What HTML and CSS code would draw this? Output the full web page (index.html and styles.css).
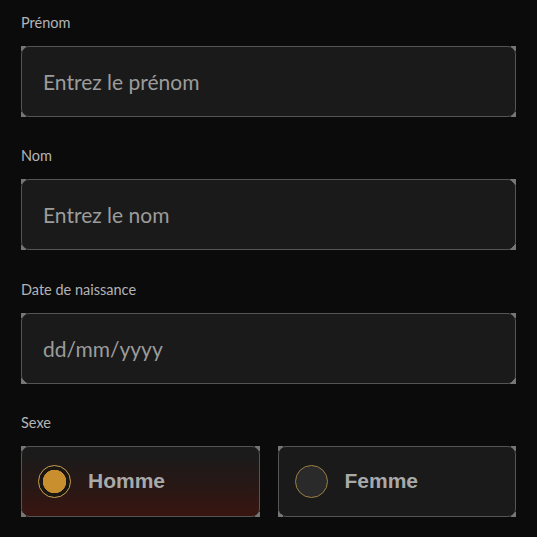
FILE: index.html
```html
<!DOCTYPE html>
<html lang="fr">
<head>
<meta charset="UTF-8">
<meta name="viewport" content="width=device-width, initial-scale=1.0">
<title>Formulaire</title>
<link rel="stylesheet" href="styles.css">
</head>
<body>

<form class="profile-form">
    <div class="field">
        <label class="field-label" for="prenom">Prénom</label>
        <div class="frame">
            <input class="text-input" type="text" id="prenom" placeholder="Entrez le prénom">
        </div>
    </div>

    <div class="field">
        <label class="field-label" for="nom">Nom</label>
        <div class="frame">
            <input class="text-input" type="text" id="nom" placeholder="Entrez le nom">
        </div>
    </div>

    <div class="field">
        <label class="field-label" for="naissance">Date de naissance</label>
        <div class="frame">
            <input class="text-input" type="text" id="naissance" placeholder="dd/mm/yyyy">
        </div>
    </div>

    <div class="field">
        <span class="field-label">Sexe</span>
        <div class="gender-row">
            <label class="frame option">
                <input type="radio" name="sexe" value="homme" checked>
                <span class="option-box">
                    <span class="dot"></span>
                    <span class="option-text">Homme</span>
                </span>
            </label>
            <label class="frame option">
                <input type="radio" name="sexe" value="femme">
                <span class="option-box">
                    <span class="dot"></span>
                    <span class="option-text">Femme</span>
                </span>
            </label>
        </div>
    </div>
</form>

</body>
</html>
```

FILE: styles.css
```css
body {
    margin: 0;
    padding: 0;
    background: #0c0b0c;
    font-family: Lato, "Open Sans", sans-serif;
}

.profile-form {
    padding: 13px 21px 0 21px;
}

.field {
    margin-bottom: 29.33px;
}

.field-label {
    display: block;
    font-size: 14.5px;
    line-height: 20px;
    color: #b4b4b4;
    margin-bottom: 13px;
}

.frame {
    position: relative;
    display: block;
    height: 71px;
}

/* little corner triangles drawn over the box */
.frame::after {
    content: "";
    position: absolute;
    inset: 0;
    pointer-events: none;
    background:
        linear-gradient(135deg, #767676 50%, transparent 50%) top left / 6px 6px no-repeat,
        linear-gradient(225deg, #767676 50%, transparent 50%) top right / 6px 6px no-repeat,
        linear-gradient(45deg, #767676 50%, transparent 50%) bottom left / 6px 6px no-repeat,
        linear-gradient(315deg, #767676 50%, transparent 50%) bottom right / 6px 6px no-repeat;
}

.text-input {
    box-sizing: border-box;
    width: 100%;
    height: 100%;
    margin: 0;
    padding: 0 21px;
    border: 1px solid #555;
    border-radius: 8px;
    background: #1a1a1a;
    font-family: Lato, "Open Sans", sans-serif;
    font-size: 21px;
    color: #ddd;
    outline: none;
}

.text-input::placeholder {
    color: #9c9c9c;
}

.gender-row {
    display: grid;
    grid-template-columns: 1fr 1fr;
    gap: 18px;
}

.option {
    cursor: pointer;
}

.option input {
    display: none;
}

.option-box {
    box-sizing: border-box;
    display: flex;
    align-items: center;
    gap: 17px;
    height: 100%;
    padding: 0 16px;
    border: 1px solid #555;
    border-radius: 8px;
    background: #1a1a1a;
}

.dot {
    box-sizing: border-box;
    width: 33px;
    height: 33px;
    border-radius: 50%;
    border: 1.5px solid #9a8045;
    background: #2a2a2a;
}

.option-text {
    font-family: "Liberation Sans", Arial, sans-serif;
    font-weight: bold;
    font-size: 21px;
    color: #a9a9a9;
}

.option input:checked + .option-box {
    background: linear-gradient(180deg, #1c1b1b 15%, #2a1714 65%, #3a1510 100%);
}

.option input:checked + .option-box .dot {
    border-color: #c9a04c;
    background: radial-gradient(circle, #c98f2f 0, #c98f2f 11.5px, #1a1614 12px);
}
```
